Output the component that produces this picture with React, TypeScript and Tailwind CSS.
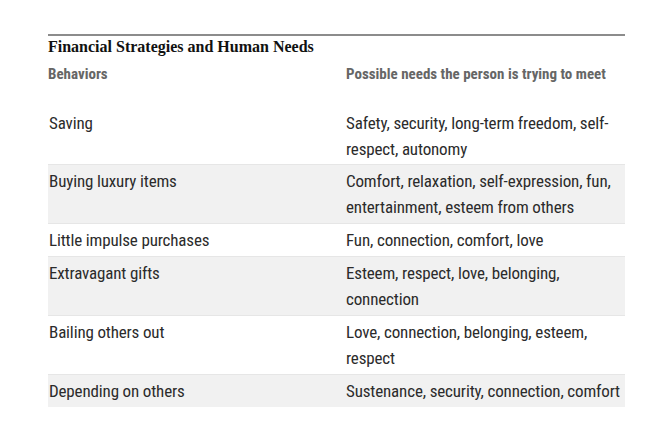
const rows = [
  { behavior: "Saving", needs: "Safety, security, long-term freedom, self-respect, autonomy" },
  { behavior: "Buying luxury items", needs: "Comfort, relaxation, self-expression, fun, entertainment, esteem from others" },
  { behavior: "Little impulse purchases", needs: "Fun, connection, comfort, love" },
  { behavior: "Extravagant gifts", needs: "Esteem, respect, love, belonging, connection" },
  { behavior: "Bailing others out", needs: "Love, connection, belonging, esteem, respect" },
  { behavior: "Depending on others", needs: "Sustenance, security, connection, comfort" },
];

export default function App() {
  return (
    <div className="w-[664px] h-[445px] bg-white pt-[34px] pl-[48px]">
      <div className="w-[577px]">
        <div className="h-[2px] bg-[#8c8c8c]" />
        <h1 className="mt-[2px] text-[16px] leading-[18px] font-bold text-[#111] font-['Liberation_Serif',serif]">
          Financial Strategies and Human Needs
        </h1>
        <div className="grid grid-cols-[298px_1fr] pt-[6px] text-[15px] leading-[24px] font-bold text-[#666] font-['Roboto_Condensed',sans-serif]">
          <div>Behaviors</div>
          <div>Possible needs the person is trying to meet</div>
        </div>
        <div className="text-[17px] leading-[26px] tracking-[-0.15px] text-[#2b2b2b] font-['Roboto_Condensed',sans-serif]">
          {rows.map((r, i) => (
            <div
              key={r.behavior}
              className={`grid grid-cols-[298px_1fr] ${i === rows.length - 1 ? "" : "border-b border-[#e6e6e6]"} ${i % 2 === 1 ? "bg-[#f1f1f1]" : "bg-white"} ${i === 0 ? "pt-[24px] pb-[2px]" : "pt-[3px] pb-[3px]"}`}
            >
              <div className="pl-[1px]">{r.behavior}</div>
              <div>{r.needs}</div>
            </div>
          ))}
        </div>
      </div>
    </div>
  );
}
